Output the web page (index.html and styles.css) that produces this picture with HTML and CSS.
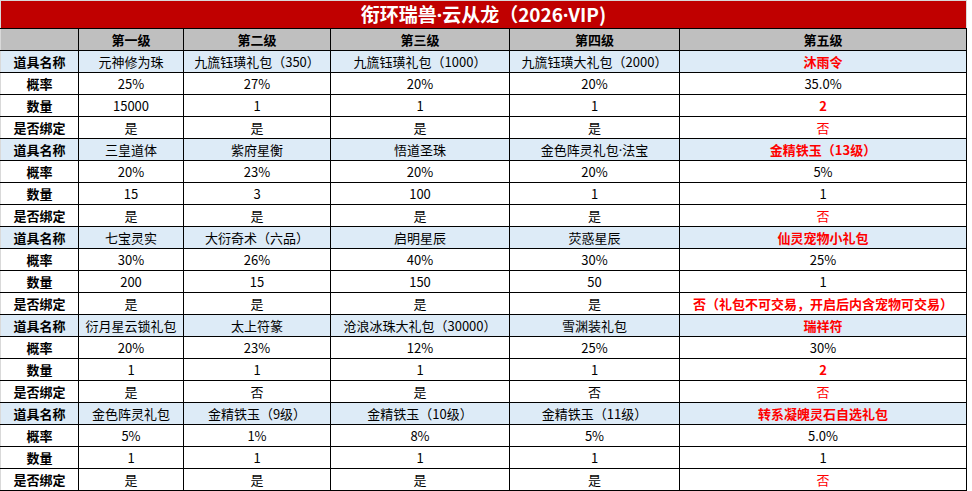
FILE: index.html
```html
<!DOCTYPE html>
<html lang="zh">
<head>
<meta charset="utf-8">
<link rel="stylesheet" href="styles.css">
</head>
<body>
<table class="sheet">
  <colgroup>
    <col class="c0"><col class="c1"><col class="c2"><col class="c3"><col class="c4"><col class="c5">
  </colgroup>
  <thead>
    <tr><th colspan="6" class="title">衔环瑞兽<span class="dot">·</span>云从龙（2026<span class="dot">·</span>VIP)</th></tr>
    <tr class="head"><th></th><th>第一级</th><th>第二级</th><th>第三级</th><th>第四级</th><th>第五级</th></tr>
  </thead>
  <tbody>
    <tr class="name"><th>道具名称</th><td>元神修为珠</td><td>九旒钰璜礼包（350）</td><td>九旒钰璜礼包（1000）</td><td>九旒钰璜大礼包（2000）</td><td class="hot">沐雨令</td></tr>
    <tr><th>概率</th><td>25%</td><td>27%</td><td>20%</td><td>20%</td><td>35.0%</td></tr>
    <tr><th>数量</th><td>15000</td><td>1</td><td>1</td><td>1</td><td class="hot">2</td></tr>
    <tr><th>是否绑定</th><td>是</td><td>是</td><td>是</td><td>是</td><td class="red">否</td></tr>

    <tr class="name"><th>道具名称</th><td>三皇道体</td><td>紫府星衡</td><td>悟道圣珠</td><td>金色阵灵礼包<span class="dot">·</span>法宝</td><td class="hot">金精铁玉（13级）</td></tr>
    <tr><th>概率</th><td>20%</td><td>23%</td><td>20%</td><td>20%</td><td>5%</td></tr>
    <tr><th>数量</th><td>15</td><td>3</td><td>100</td><td>1</td><td>1</td></tr>
    <tr><th>是否绑定</th><td>是</td><td>是</td><td>是</td><td>是</td><td class="red">否</td></tr>

    <tr class="name"><th>道具名称</th><td>七宝灵实</td><td>大衍奇术（六品）</td><td>启明星辰</td><td>荧惑星辰</td><td class="hot">仙灵宠物小礼包</td></tr>
    <tr><th>概率</th><td>30%</td><td>26%</td><td>40%</td><td>30%</td><td>25%</td></tr>
    <tr><th>数量</th><td>200</td><td>15</td><td>150</td><td>50</td><td>1</td></tr>
    <tr><th>是否绑定</th><td>是</td><td>是</td><td>是</td><td>是</td><td class="hot">否（礼包不可交易，开启后内含宠物可交易）</td></tr>

    <tr class="name"><th>道具名称</th><td>衍月星云锁礼包</td><td>太上符篆</td><td>沧浪冰珠大礼包（30000）</td><td>雪渊装礼包</td><td class="hot">瑞祥符</td></tr>
    <tr><th>概率</th><td>20%</td><td>23%</td><td>12%</td><td>25%</td><td>30%</td></tr>
    <tr><th>数量</th><td>1</td><td>1</td><td>1</td><td>1</td><td class="hot">2</td></tr>
    <tr><th>是否绑定</th><td>是</td><td>否</td><td>是</td><td>否</td><td class="red">否</td></tr>

    <tr class="name"><th>道具名称</th><td>金色阵灵礼包</td><td>金精铁玉（9级）</td><td>金精铁玉（10级）</td><td>金精铁玉（11级）</td><td class="hot">转系凝魄灵石自选礼包</td></tr>
    <tr><th>概率</th><td>5%</td><td>1%</td><td>8%</td><td>5%</td><td>5.0%</td></tr>
    <tr><th>数量</th><td>1</td><td>1</td><td>1</td><td>1</td><td>1</td></tr>
    <tr><th>是否绑定</th><td>是</td><td>是</td><td>是</td><td>是</td><td class="red">否</td></tr>
  </tbody>
</table>
</body>
</html>
```

FILE: styles.css
```css
html, body {
  margin: 0;
  padding: 0;
  background: #ffffff;
}

.sheet {
  border-collapse: collapse;
  table-layout: fixed;
  width: 967px;
  font-family: "Noto Sans CJK SC", "Noto Sans", sans-serif;
  font-size: 13px;
  color: #000000;
}

.c0 { width: 78px; }
.c1 { width: 105px; }
.c2 { width: 147px; }
.c3 { width: 179px; }
.c4 { width: 170px; }
.c5 { width: auto; }

.sheet th,
.sheet td {
  border: 1px solid #000000;
  height: 22px;
  padding: 0;
  line-height: 19px;
  text-align: center;
  white-space: nowrap;
  overflow: hidden;
  box-sizing: border-box;
}

.sheet td { font-weight: normal; }
.sheet th { font-weight: bold; }

.dot {
  font-family: "Noto Sans", "DejaVu Sans", sans-serif;
}

.sheet .title {
  background: #c00000;
  color: #ffffff;
  font-size: 19px;
  height: 28px;
  line-height: 25px;
  border-top: 1px solid #d9d9d9;
  border-left: 1px solid #d9d9d9;
  border-right: 1px solid #d9d9d9;
  border-bottom: 1px solid #000000;
}

.head th {
  background: #bfbfbf;
}

.name th,
.name td {
  background: #ddebf7;
}

.sheet .hot {
  color: #ff0000;
  font-weight: bold;
}

.sheet .red {
  color: #ff0000;
}

.sheet tr > :first-child {
  border-left: 1px solid #d9d9d9;
}
```
